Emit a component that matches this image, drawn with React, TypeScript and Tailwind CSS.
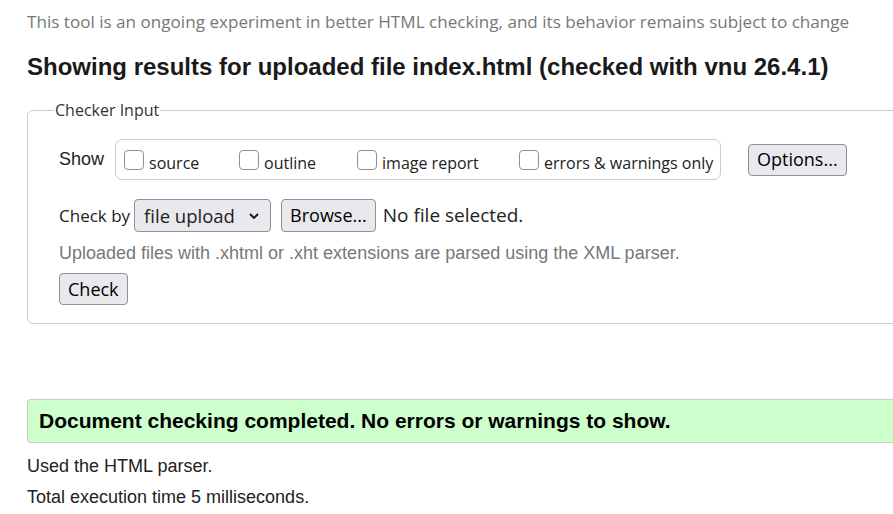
const ui = "font-['Open_Sans',sans-serif]";
const arial = "font-['Liberation_Sans',Arial,sans-serif]";

function Btn({ children, className = "" }: { children: React.ReactNode; className?: string }) {
  return (
    <button
      type="button"
      className={`${ui} rounded-[4px] border border-[#8f8f9d] bg-[#e9e9ed] px-[8px] text-[18px] leading-[29px] text-black ${className}`}
    >
      {children}
    </button>
  );
}

function Box({ label }: { label: string }) {
  return (
    <label className="flex items-center">
      <span className="mr-[5px] block h-[20px] w-[20px] rounded-[4px] border border-[#8f8f9d] bg-white" />
      <span className={`${ui} translate-y-[3px] text-[16px] text-[#222]`}>{label}</span>
    </label>
  );
}

export default function App() {
  return (
    <div className="min-h-[514px] w-[893px] overflow-hidden bg-white pl-[27px] text-[#222]">
      <p className={`${ui} whitespace-nowrap pt-[10px] text-[17.1px] leading-[24px] text-[#777]`}>
        This tool is an ongoing experiment in better HTML checking, and its behavior remains subject to change
      </p>
      <h2 className={`${arial} mt-[18px] whitespace-nowrap text-[24px] font-bold leading-[30px] text-[#1a1a1a]`}>
        Showing results for uploaded file index.html (checked with vnu 26.4.1)
      </h2>

      <fieldset className="mt-[16px] w-[900px] rounded-[6px] border border-[#ccc] pb-[18px] pl-[26px]">
        <legend className={`${ui} px-[1px] text-[16px] text-[#333]`}>Checker Input</legend>

        <div className="pl-[5px]">
          <div className="mt-[17px] flex items-center">
            <span className={`${arial} mr-[11px] text-[18px]`}>Show</span>
            <div className="flex h-[41px] w-[606px] items-center rounded-[7px] border border-[#ccc] pl-[8px]">
              <div className="w-[115px]"><Box label="source" /></div>
              <div className="w-[118px]"><Box label="outline" /></div>
              <div className="w-[162px]"><Box label="image report" /></div>
              <Box label="errors & warnings only" />
            </div>
            <Btn className="ml-[27px] h-[32px]">Options...</Btn>
          </div>

          <div className="mt-[19px] flex items-center">
            <span className={`${ui} mr-[4px] text-[17px]`}>Check by</span>
            <div className={`${ui} flex h-[33px] w-[137px] items-center justify-between rounded-[4px] border border-[#8f8f9d] bg-[#e9e9ed] pl-[9px] pr-[10px] text-[18.5px]`}>
              <span>file upload</span>
              <svg width="12" height="8" viewBox="0 0 12 8">
                <path d="M2 2l4 4 4-4" fill="none" stroke="#111" strokeWidth="1.8" />
              </svg>
            </div>
            <Btn className="ml-[10px] h-[33px] text-[18.5px]">Browse...</Btn>
            <span className={`${ui} ml-[7px] text-[19px]`}>No file selected.</span>
          </div>

          <p className={`${arial} mt-[9px] whitespace-nowrap text-[18px] leading-[24px] text-[#777]`}>
            Uploaded files with .xhtml or .xht extensions are parsed using the XML parser.
          </p>
          <Btn className="mt-[8px] h-[32px]">Check</Btn>
        </div>
      </fieldset>

      <div className="mt-[75px] flex h-[44px] w-[900px] items-center rounded-l-[4px] border border-r-0 border-[#ccc] bg-[#ccffcc] pl-[11px]">
        <span className={`${arial} text-[21px] font-bold text-black`}>
          Document checking completed. No errors or warnings to show.
        </span>
      </div>
      <p className={`${arial} mt-[12px] text-[18px] leading-[22px]`}>Used the HTML parser.</p>
      <p className={`${arial} mt-[9px] text-[18px] leading-[22px]`}>Total execution time 5 milliseconds.</p>
    </div>
  );
}
